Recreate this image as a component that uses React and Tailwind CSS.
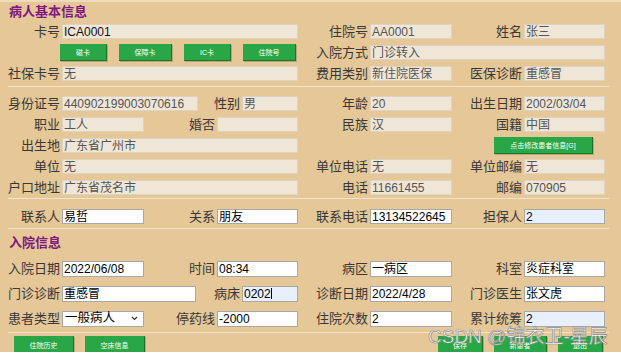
const font = { fontFamily: '"Liberation Sans", "Noto Sans CJK SC", sans-serif' };

const inputStyles = {
  ro: 'bg-[#efe6d8] border-[#ddd3c3] text-[#555]',
  dark: 'bg-[#efe6d8] border-[#ddd3c3] text-[#111]',
  white: 'bg-white border-[#a8a8a8] text-black',
  blue: 'bg-[#e8f0fe] border-[#a8a8a8] text-black',
};

const Field = ({ label, lw, iw, value = '', kind = 'ro', h = 'h-[15px]', cursor }) => (
  <div className="flex items-center">
    <span className={`${lw} text-right pr-[2px] text-[13px] leading-none text-[#383838] whitespace-nowrap`}>{label}</span>
    <div className={`${iw} ${h} ${inputStyles[kind]} border flex items-center px-[1px] text-[12px] leading-none whitespace-nowrap overflow-hidden`}>
      <span>{value}</span>
      {cursor && <span className="w-px h-[11px] bg-black" />}
    </div>
  </div>
);

const GreenBtn = ({ children, className = '' }) => (
  <div className={`${className} bg-[#29a746] border-r border-b border-[#1c7431] shadow-[1px_1px_0_#b9a47c] flex items-center justify-center text-white text-[7px] leading-none whitespace-nowrap`}>
    {children}
  </div>
);

const Sep = ({ className = '' }) => <div className={`mx-[8px] mr-[12px] border-t border-[#f3e4c9] ${className}`} />;

const Title = ({ children, className = '' }) => (
  <div className={`${className} pl-[9px] flex items-center text-[13px] font-bold text-[#80177f] leading-none`}>{children}</div>
);

export default function App() {
  return (
    <div className="w-[621px] h-[355px] bg-white overflow-hidden" style={font}>
      <div className="relative h-[352px] bg-[#e5c798] border-t-2 border-[#efdcbb] overflow-hidden">
        <Title className="h-[19px]">病人基本信息</Title>

        {/* 基本卡信息 */}
        <div className="h-[21px] flex items-center">
          <Field label="卡号" lw="w-[62px]" iw="w-[236px]" value="ICA0001" kind="dark" />
          <Field label="住院号" lw="w-[72px]" iw="w-[82px]" value="AA0001" />
          <Field label="姓名" lw="w-[72px]" iw="w-[81px]" value="张三" />
        </div>
        <div className="h-[21px] flex items-center">
          <div className="w-[298px] flex gap-[12px] pl-[60px]">
            <GreenBtn className="w-[47px] h-[17px]">磁卡</GreenBtn>
            <GreenBtn className="w-[53px] h-[17px]">保障卡</GreenBtn>
            <GreenBtn className="w-[47px] h-[17px]">IC卡</GreenBtn>
            <GreenBtn className="w-[53px] h-[17px]">住院号</GreenBtn>
          </div>
          <Field label="入院方式" lw="w-[72px]" iw="w-[235px]" value="门诊转入" />
        </div>
        <div className="h-[21px] flex items-center">
          <Field label="社保卡号" lw="w-[62px]" iw="w-[236px]" value="无" />
          <Field label="费用类别" lw="w-[72px]" iw="w-[82px]" value="新住院医保" />
          <Field label="医保诊断" lw="w-[72px]" iw="w-[81px]" value="重感冒" />
        </div>
        <Sep className="mt-[2px] mb-[6px]" />

        {/* 身份信息 */}
        <div className="h-[21px] flex items-center">
          <Field label="身份证号" lw="w-[62px]" iw="w-[136px]" value="440902199003070616" />
          <Field label="性别" lw="w-[44px]" iw="w-[56px]" value="男" />
          <Field label="年龄" lw="w-[72px]" iw="w-[82px]" value="20" />
          <Field label="出生日期" lw="w-[72px]" iw="w-[81px]" value="2002/03/04" />
        </div>
        <div className="h-[21px] flex items-center">
          <Field label="职业" lw="w-[62px]" iw="w-[82px]" value="工人" />
          <Field label="婚否" lw="w-[73px]" iw="w-[81px]" />
          <Field label="民族" lw="w-[72px]" iw="w-[82px]" value="汉" />
          <Field label="国籍" lw="w-[72px]" iw="w-[81px]" value="中国" />
        </div>
        <div className="h-[21px] flex items-center">
          <Field label="出生地" lw="w-[62px]" iw="w-[236px]" value="广东省广州市" />
          <GreenBtn className="ml-[196px] w-[99px] h-[17px]">点击修改患者信息[G]</GreenBtn>
        </div>
        <div className="h-[21px] flex items-center">
          <Field label="单位" lw="w-[62px]" iw="w-[236px]" value="无" />
          <Field label="单位电话" lw="w-[72px]" iw="w-[82px]" value="无" />
          <Field label="单位邮编" lw="w-[72px]" iw="w-[81px]" value="无" />
        </div>
        <div className="h-[21px] flex items-center">
          <Field label="户口地址" lw="w-[62px]" iw="w-[236px]" value="广东省茂名市" />
          <Field label="电话" lw="w-[72px]" iw="w-[82px]" value="11661455" />
          <Field label="邮编" lw="w-[72px]" iw="w-[81px]" value="070905" />
        </div>
        <Sep className="mb-[7px]" />

        {/* 联系人 */}
        <div className="h-[21px] flex items-center">
          <Field label="联系人" lw="w-[62px]" iw="w-[82px]" value="易哲" kind="white" />
          <Field label="关系" lw="w-[73px]" iw="w-[81px]" value="朋友" kind="white" />
          <Field label="联系电话" lw="w-[72px]" iw="w-[82px]" value="13134522645" kind="white" />
          <Field label="担保人" lw="w-[72px]" iw="w-[81px]" value="2" kind="blue" />
        </div>
        <Sep className="mt-[1px]" />

        <Title className="h-[27px]">入院信息</Title>

        {/* 入院信息 */}
        <div className="h-[25px] flex items-center">
          <Field label="入院日期" lw="w-[62px]" iw="w-[82px]" value="2022/06/08" kind="white" h="h-[16px]" />
          <Field label="时间" lw="w-[73px]" iw="w-[81px]" value="08:34" kind="white" h="h-[16px]" />
          <Field label="病区" lw="w-[72px]" iw="w-[82px]" value="一病区" kind="white" h="h-[16px]" />
          <Field label="科室" lw="w-[72px]" iw="w-[81px]" value="炎症科室" kind="white" h="h-[16px]" />
        </div>
        <div className="h-[25px] flex items-center">
          <Field label="门诊诊断" lw="w-[62px]" iw="w-[134px]" value="重感冒" kind="white" h="h-[16px]" />
          <Field label="病床" lw="w-[46px]" iw="w-[56px]" value="0202" kind="blue" h="h-[16px]" cursor />
          <Field label="诊断日期" lw="w-[72px]" iw="w-[82px]" value="2022/4/28" kind="white" h="h-[16px]" />
          <Field label="门诊医生" lw="w-[72px]" iw="w-[81px]" value="张文虎" kind="white" h="h-[16px]" />
        </div>
        <div className="h-[25px] flex items-center">
          <div className="flex items-center">
            <span className="w-[62px] text-right pr-[2px] text-[13px] leading-none text-[#383838]">患者类型</span>
            <div className="w-[82px] h-[16px] bg-white border border-[#a8a8a8] flex items-center justify-between pl-[2px] pr-[5px] text-[12.5px] leading-none text-black">
              <span>一般病人</span>
              <svg width="7" height="5" viewBox="0 0 7 5"><path d="M1 1l2.5 2.5L6 1" fill="none" stroke="#333" strokeWidth="1.2" /></svg>
            </div>
          </div>
          <Field label="停药线" lw="w-[73px]" iw="w-[81px]" value="-2000" kind="white" h="h-[16px]" />
          <Field label="住院次数" lw="w-[72px]" iw="w-[82px]" value="2" kind="white" h="h-[16px]" />
          <Field label="累计统筹" lw="w-[72px]" iw="w-[81px]" value="2" kind="blue" h="h-[16px]" />
        </div>
        <Sep className="mt-[1px]" />

        {/* 底部按钮 */}
        <div className="flex mt-[3px] pl-[14px]">
          <GreenBtn className="w-[60px] h-[20px]">住院历史</GreenBtn>
          <GreenBtn className="ml-[11px] w-[60px] h-[20px]">空床信息</GreenBtn>
          <GreenBtn className="ml-[293px] w-[45px] h-[20px]">保存</GreenBtn>
          <GreenBtn className="ml-[11px] w-[53px] h-[20px]">新患者</GreenBtn>
          <GreenBtn className="ml-[11px] w-[45px] h-[20px]">退出</GreenBtn>
        </div>

        <div className="absolute left-[428px] top-[325px] text-[19px] leading-none text-white whitespace-nowrap [-webkit-text-stroke:0.7px_#8c8c8c]">
          CSDN @锦衣卫-星辰
        </div>
      </div>
    </div>
  );
}
